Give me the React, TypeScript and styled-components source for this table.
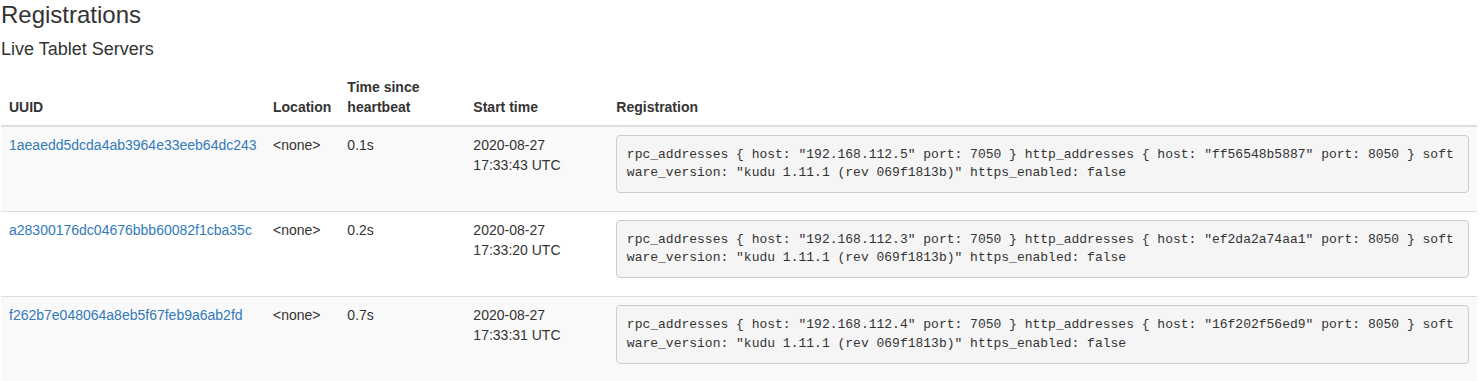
import React from "react";
import styled, { createGlobalStyle } from "styled-components";

const GlobalStyle = createGlobalStyle`
  html, body {
    margin: 0;
    padding: 0;
    background: #fff;
  }

  body {
    font-family: "Liberation Sans", Arial, Helvetica, sans-serif;
    font-size: 14px;
    line-height: 1.42857143;
    color: #333;
  }
`;

const Page = styled.div`
  width: 1476px;
  padding: 2px 0 0 1px;
`;

const Title = styled.h3`
  font-size: 24px;
  font-weight: 500;
  line-height: 1.1;
  margin: 0 0 10px;
`;

const Subtitle = styled.h4`
  font-size: 18px;
  font-weight: 500;
  line-height: 1.1;
  margin: 12px 0 9px;
`;

const Table = styled.table`
  width: 100%;
  border-collapse: collapse;
  border-spacing: 0;
  margin-bottom: 20px;
`;

const HeadCell = styled.th<{ $w?: number }>`
  ${({ $w }) => ($w ? `width: ${$w}px;` : "")}
  box-sizing: border-box;
  text-align: left;
  vertical-align: bottom;
  font-weight: bold;
  padding: 8px;
  line-height: 1.42857143;
  border-bottom: 2px solid #ddd;
`;

const Row = styled.tr<{ $striped: boolean }>`
  background-color: ${({ $striped }) => ($striped ? "#f9f9f9" : "#fff")};
`;

const Cell = styled.td`
  padding: 8px;
  vertical-align: top;
  line-height: 1.42857143;
  border-top: 1px solid #ddd;
`;

const UuidLink = styled.a`
  color: #337ab7;
  text-decoration: none;
`;

const Pre = styled.pre`
  display: block;
  margin: 0 0 10px;
  padding: 9.5px;
  font-family: "Liberation Mono", "Courier New", monospace;
  font-size: 13px;
  line-height: 1.42857143;
  color: #333;
  word-break: break-all;
  word-wrap: break-word;
  white-space: pre-wrap;
  background-color: #f5f5f5;
  border: 1px solid #ccc;
  border-radius: 4px;
`;

type Server = {
  uuid: string;
  heartbeat: string;
  date: string;
  time: string;
  rpcHost: string;
  httpHost: string;
};

const servers: Server[] = [
  {
    uuid: "1aeaedd5dcda4ab3964e33eeb64dc243",
    heartbeat: "0.1s",
    date: "2020-08-27",
    time: "17:33:43 UTC",
    rpcHost: "192.168.112.5",
    httpHost: "ff56548b5887",
  },
  {
    uuid: "a28300176dc04676bbb60082f1cba35c",
    heartbeat: "0.2s",
    date: "2020-08-27",
    time: "17:33:20 UTC",
    rpcHost: "192.168.112.3",
    httpHost: "ef2da2a74aa1",
  },
  {
    uuid: "f262b7e048064a8eb5f67feb9a6ab2fd",
    heartbeat: "0.7s",
    date: "2020-08-27",
    time: "17:33:31 UTC",
    rpcHost: "192.168.112.4",
    httpHost: "16f202f56ed9",
  },
];

const registration = (s: Server) =>
  `rpc_addresses { host: "${s.rpcHost}" port: 7050 } http_addresses { host: "${s.httpHost}" port: 8050 } software_version: "kudu 1.11.1 (rev 069f1813b)" https_enabled: false`;

const App = () => {
  return (
    <Page>
      <GlobalStyle />
      <Title>Registrations</Title>
      <Subtitle>Live Tablet Servers</Subtitle>
      <Table>
        <thead>
          <tr>
            <HeadCell $w={264}>UUID</HeadCell>
            <HeadCell $w={74}>Location</HeadCell>
            <HeadCell $w={126}>Time since heartbeat</HeadCell>
            <HeadCell $w={143}>Start time</HeadCell>
            <HeadCell>Registration</HeadCell>
          </tr>
        </thead>
        <tbody>
          {servers.map((s, i) => (
            <Row key={s.uuid} $striped={i % 2 === 0}>
              <Cell>
                <UuidLink href="#">{s.uuid}</UuidLink>
              </Cell>
              <Cell>&lt;none&gt;</Cell>
              <Cell>{s.heartbeat}</Cell>
              <Cell>
                {s.date}
                <br />
                {s.time}
              </Cell>
              <Cell>
                <Pre>{registration(s)}</Pre>
              </Cell>
            </Row>
          ))}
        </tbody>
      </Table>
    </Page>
  );
};

export default App;
